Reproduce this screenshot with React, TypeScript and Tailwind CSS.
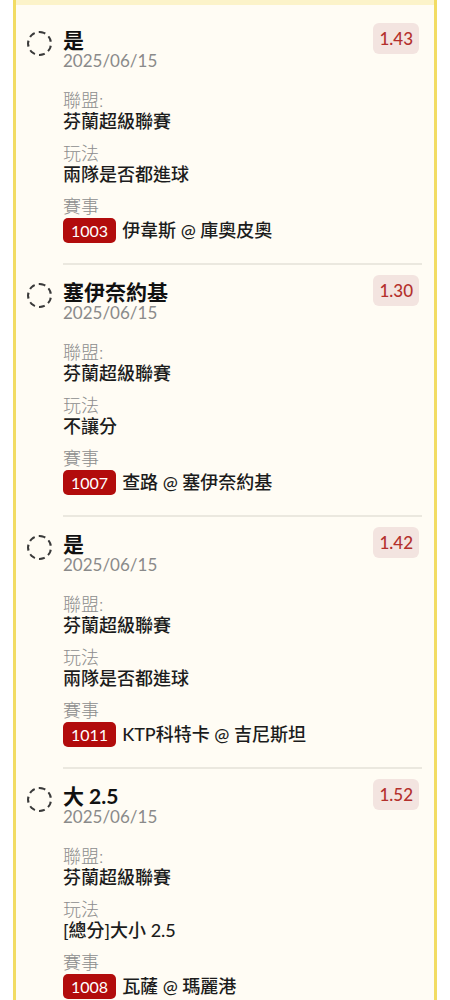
const FONT = "font-['Lato','Noto_Sans_CJK_TC',sans-serif]";

type Bet = {
  pick: string;
  date: string;
  odds: string;
  league: string;
  market: string;
  code: string;
  match: string;
};

const bets: Bet[] = [
  {
    pick: '是',
    date: '2025/06/15',
    odds: '1.43',
    league: '芬蘭超級聯賽',
    market: '兩隊是否都進球',
    code: '1003',
    match: '伊韋斯 @ 庫奧皮奧',
  },
  {
    pick: '塞伊奈約基',
    date: '2025/06/15',
    odds: '1.30',
    league: '芬蘭超級聯賽',
    market: '不讓分',
    code: '1007',
    match: '查路 @ 塞伊奈約基',
  },
  {
    pick: '是',
    date: '2025/06/15',
    odds: '1.42',
    league: '芬蘭超級聯賽',
    market: '兩隊是否都進球',
    code: '1011',
    match: 'KTP科特卡 @ 吉尼斯坦',
  },
  {
    pick: '大 2.5',
    date: '2025/06/15',
    odds: '1.52',
    league: '芬蘭超級聯賽',
    market: '[總分]大小 2.5',
    code: '1008',
    match: '瓦薩 @ 瑪麗港',
  },
];

const Label = ({ children }: { children: string }) => (
  <div className="h-[21px] text-[18px] leading-[21px] font-light text-[#8d8d8d]">{children}</div>
);

const Field = ({ label, value }: { label: string; value: string }) => (
  <div>
    <Label>{label}</Label>
    <div className="h-[21px] text-[18px] leading-[21px] font-medium text-[#1c1c1c]">{value}</div>
  </div>
);

const BetRow = ({ bet }: { bet: Bet }) => (
  <div className="flex items-start pt-[10px] pl-[11px] pr-[12px]">
    <div className="mt-[8px] h-[25px] w-[25px] shrink-0 rounded-full border-2 border-dashed border-[#3a3a3a]" />
    <div className="ml-[11px] flex-1 border-b-2 border-[#ebe8df] pb-[20px] pt-[5px]">
      <div className="flex items-start justify-between">
        <div>
          <div className="h-[24px] text-[21px] leading-[24px] font-bold text-[#111]">{bet.pick}</div>
          <div className="mt-[-1px] h-[20px] text-[17px] leading-[20px] text-[#8a8a8a]">{bet.date}</div>
        </div>
        <div className="-mt-[5px] mr-[3px] rounded-md bg-[#f3e4e0] px-[6px] py-[5px] text-[17px] leading-[21px] font-medium text-[#b3302c]">
          {bet.odds}
        </div>
      </div>
      <div className="mt-[19px] flex flex-col gap-[11px]">
        <Field label="聯盟:" value={bet.league} />
        <Field label="玩法" value={bet.market} />
        <div>
          <Label>賽事</Label>
          <div className="mt-[1px] flex h-[25px] items-center gap-[6px]">
            <span className="rounded-[5px] bg-[#b20c0c] px-[8px] text-[16px] leading-[25px] text-white">
              {bet.code}
            </span>
            <span className="text-[18px] leading-[25px] font-medium text-[#1c1c1c]">{bet.match}</span>
          </div>
        </div>
      </div>
    </div>
  </div>
);

export default function App() {
  return (
    <div className={`min-h-[1000px] w-[450px] bg-white ${FONT}`}>
      <div className="mx-[13px] min-h-[1000px] border-x-[3px] border-[#f2dc63] bg-[#fffcf4]">
        <div className="h-[5px] bg-[#fcf3c9]" />
        <div className="pt-[8px]">
          {bets.map((bet, i) => (
            <BetRow key={i} bet={bet} />
          ))}
        </div>
      </div>
    </div>
  );
}
